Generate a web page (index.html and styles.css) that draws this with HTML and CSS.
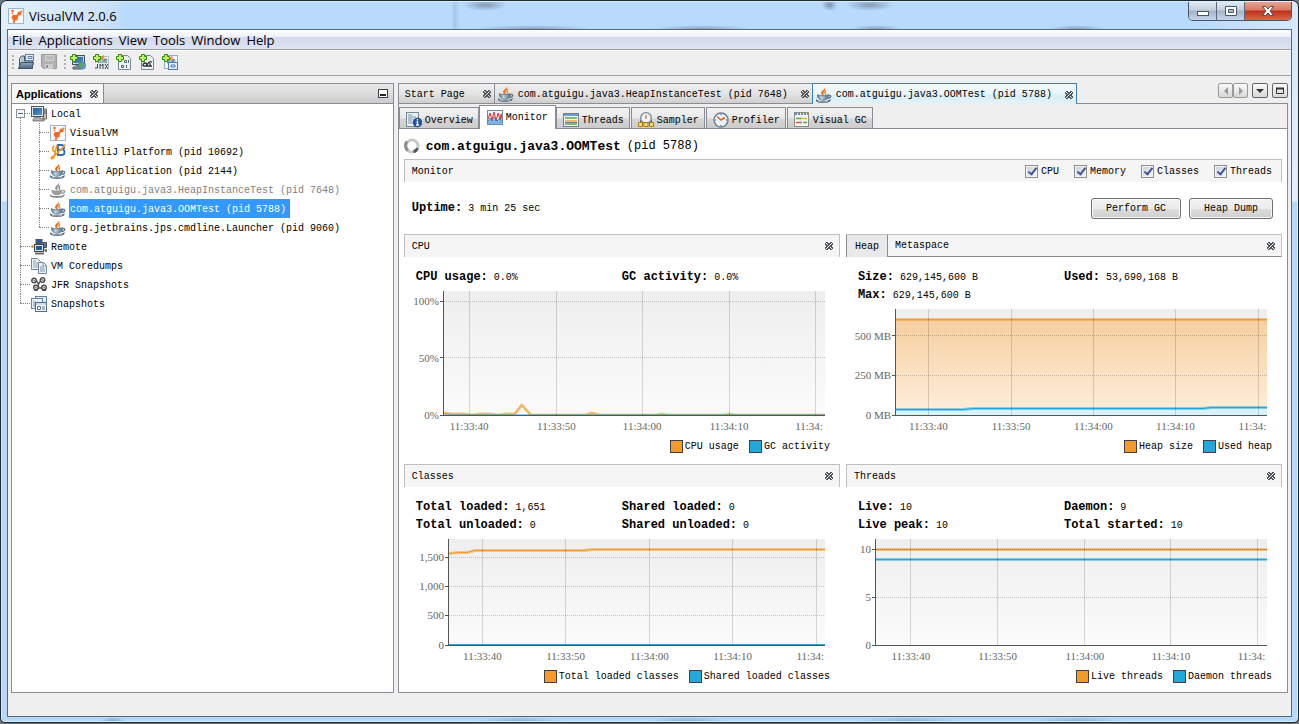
FILE: index.html
```html
<!DOCTYPE html>
<html lang="en">
<head>
    <meta charset="UTF-8">
    <meta name="viewport" content="width=device-width, initial-scale=1.0">
    <title>VisualVM 2.0.6</title>
    <link rel="stylesheet" href="styles.css">
</head>
<body>

    <!-- Icon sprite -->
    <svg class="sprite" aria-hidden="true">
        <defs>
            <linearGradient id="plotFill" x1="0" y1="0" x2="0" y2="1"><stop offset="0" stop-color="#eeeeee"/><stop offset="1" stop-color="#fbfbfb"/></linearGradient>
            <linearGradient id="heapFill" x1="0" y1="0" x2="0" y2="1"><stop offset="0" stop-color="#f5cf9f"/><stop offset="1" stop-color="#feefdd"/></linearGradient>
            <linearGradient id="steel" x1="0" y1="0" x2="0" y2="1"><stop offset="0" stop-color="#8fa9bd"/><stop offset="1" stop-color="#4c657b"/></linearGradient>
            <linearGradient id="cup" x1="0" y1="0" x2="1" y2="0"><stop offset="0" stop-color="#54718a"/><stop offset=".35" stop-color="#c3d3df"/><stop offset="1" stop-color="#4f6b83"/></linearGradient>
            <linearGradient id="screen" x1="0" y1="0" x2="1" y2="1"><stop offset="0" stop-color="#1c5f9e"/><stop offset="1" stop-color="#5a93c4"/></linearGradient>
        </defs>
        <symbol id="i-vm" viewBox="0 0 16 16">
            <rect x=".5" y=".5" width="15" height="15" fill="#f6f8fb" stroke="#9db4cd"/>
            <circle cx="4.500" cy="3" r="1.300" fill="#f26a21"/><circle cx="11.500" cy="5.500" r="2" fill="#f26a21"/><circle cx="13.500" cy="3.500" r="1" fill="#f26a21"/>
            <path d="M4.500 7.500C6 6 8 8 10 6l1 1.500C9.500 8 10 10 9.500 11.500c-1 1.800-4 1.500-5 0-1-1-1-3 0-4z" fill="#f26a21"/><circle cx="6" cy="13.700" r="1.200" fill="#f26a21"/><circle cx="4.500" cy="5.500" r=".8" fill="#f26a21"/>
        </symbol>
        <symbol id="i-java" viewBox="0 0 16 16">
            <path d="M8.800 0c.8 2.500-3.800 3.700-3.800 6 0 1.500 1.500 1.800 2 3 1.500-1-.2-2.500.8-4C8.800 3.800 10 2.500 8.800 0z" fill="#e8701a"/>
            <path d="M10.500 2.500C7.500 4.500 8 6 9 7.300c.3.700 0 1.200-.5 1.900C12 8.200 9 6 10.500 2.500z" fill="#f09030"/>
            <path d="M13 8.500c2.500-.3 2.500 2.800-1.500 3" stroke="#54708a" stroke-width="1.300" fill="none"/>
            <path d="M1.500 7.500c1 1.500 9.500 1.500 11 0 .3 3-1.500 5.800-5.500 5.800S1.200 10.500 1.500 7.500z" fill="url(#cup)" stroke="#4e697f" stroke-width=".7"/>
            <path d="M0 12c1 1.800 3.500 2 7 2s6-.2 7.500-2c.8 2.800-2.500 3.900-7.500 3.900S-.8 14.800 0 12z" fill="#4d6275"/><path d="M2 14.300c2.500.7 7.500.7 10 0" stroke="#b7c7d3" stroke-width=".8" fill="none"/>
        </symbol>
        <symbol id="i-java-off" viewBox="0 0 16 16">
            <path d="M8.800 0c.8 2.500-3.800 3.700-3.800 6 0 1.500 1.500 1.800 2 3 1.500-1-.2-2.500.8-4C8.800 3.800 10 2.500 8.800 0zM10.500 2.500C7.500 4.500 8 6 9 7.300c.3.700 0 1.200-.5 1.900C12 8.200 9 6 10.500 2.500z" fill="#999"/>
            <path d="M13 8.500c2.500-.3 2.500 2.800-1.500 3" stroke="#999" stroke-width="1.300" fill="none"/>
            <path d="M1.500 7.500c1 1.500 9.500 1.500 11 0 .3 3-1.500 5.800-5.500 5.800S1.200 10.500 1.500 7.500z" fill="#9d9d9d"/>
            <path d="M0 12c1 1.800 3.500 2 7 2s6-.2 7.500-2c.8 2.800-2.500 3.900-7.500 3.900S-.8 14.800 0 12z" fill="#8b8b8b"/>
        </symbol>
        <symbol id="i-idea" viewBox="0 0 16 16">
            <path d="M8 1h3.500c3.200 0 3.200 4 1 4.700 3 .5 2.700 5.300-1 5.300H8z" fill="none" stroke="#2f6ab8" stroke-width="1.800"/><path d="M8 5.700h4" stroke="#2f6ab8" stroke-width="1.600"/>
            <path d="M4 1.500C2 4 2 7.500 5 7.500M7 1C6 5 5 9 4.500 11.500 4 14 3 15 1.500 14.500c-1-1 1-2 3-3C8 9 12 4 15.500.500" stroke="#f29a1c" stroke-width="1.600" fill="none"/>
        </symbol>
        <symbol id="i-pc" viewBox="0 0 16 16">
            <path d="M12 3h3.500v10H12z" fill="#c5c5bd" stroke="#666"/><path d="M13 5h2M13 7h2" stroke="#555"/>
            <rect x=".5" y=".5" width="12" height="10" fill="#dfe5ea" stroke="#4c565e"/><rect x="2" y="2" width="9" height="7" fill="url(#screen)"/>
            <path d="M4 11h5l1 2h3v2H2v-1.500z" fill="#aeb3b5" stroke="#555" stroke-width=".7"/>
        </symbol>
        <symbol id="i-remote" viewBox="0 0 16 16">
            <rect x="5" y=".5" width="6" height="4" fill="#285f96" stroke="#555"/><rect x="9.500" y="3.500" width="6" height="5" fill="#3a79b2" stroke="#555"/>
            <rect x="3.500" y="5.500" width="9" height="7" fill="#dce4ea" stroke="#444"/><rect x="5" y="7" width="6" height="4" fill="#1d5c99"/>
            <path d="M4 13.500h9v2H4zM13 10h3v3h-2z" fill="#66706f"/><circle cx="1.500" cy="7.500" r="1.500" fill="#dca02b"/><path d="M14 9v2" stroke="#f0bd36"/>
        </symbol>
        <symbol id="i-dump" viewBox="0 0 16 16">
            <path d="M.5.500h6l3 3v8h-9z" fill="#edf2f6" stroke="#70859a"/><path d="M2 3h3M2 5h5M2 7h5M2 9h5" stroke="#8fa3b5"/>
            <path d="M7.500 4.500h5l3 3v8h-8z" fill="#edf2f6" stroke="#70859a"/><path d="M9 9h4M9 11h5M9 13h5M12 5v3h3" stroke="#8096aa" fill="none"/>
        </symbol>
        <symbol id="i-jfr" viewBox="0 0 16 16">
            <g fill="#ddd" stroke="#444" stroke-width="1.300"><circle cx="3" cy="3.500" r="2.300"/><circle cx="11.500" cy="3" r="2.300"/><circle cx="5" cy="10.500" r="2.300"/><circle cx="13" cy="10.500" r="2.300"/><path d="M5.500 3.500L7.500 7l2-3M7.500 7v3M7.500 11h3M3 13h4M11 13.300h4" fill="none"/></g>
            <path d="M2 2.500l2 2M10.500 2l2 2M4 9.500l2 2M12 9.500l2 2" stroke="#555"/>
        </symbol>
        <symbol id="i-snap" viewBox="0 0 16 16">
            <rect x="4.500" y=".5" width="11" height="9" fill="#dfe9f5" stroke="#6882a5"/><rect x=".5" y="2.500" width="11" height="10" fill="#e8eff8" stroke="#6882a5"/>
            <path d="M2 6h3M2 8h3M2 10h3" stroke="#6d90bf"/><rect x="4.500" y="6.500" width="11" height="9" fill="#f4f7fb" stroke="#526c90"/><path d="M5 8h10" stroke="#a9bfdc"/><path d="M6.500 10.500h3v3h-3zM11 11h3M11 13h3" stroke="#5f748c" fill="none"/>
        </symbol>
        <symbol id="i-open" viewBox="0 0 16 16">
            <path d="M1.500 14.500v-10l2-2.500h3v5h8v7.500z" fill="#b9c9d5" stroke="#455a6c"/><rect x="7.500" y=".5" width="8" height="6" fill="#eef4fc" stroke="#5c7db3"/><path d="M10 2.500h4v2h-4z" fill="none" stroke="#5c7db3"/>
            <path d="M.5 14.500l2.500-6h12.500l-1.500 6z" fill="url(#steel)" stroke="#3c5367"/>
        </symbol>
        <symbol id="i-save" viewBox="0 0 16 16">
            <path d="M.5.500h15v14h-13l-2-2z" fill="#b2b2b2" stroke="#9a9a9a"/><path d="M4 1h9v6H4z" fill="#d2d2d2"/><path d="M5 3h7M5 5h7" stroke="#a2a2a2"/><path d="M4 10h8v5H4z" fill="#cfcfcf"/><path d="M5 11h2v3H5z" fill="#949494"/>
        </symbol>
        <symbol id="i-plus" viewBox="0 0 8 8"><path d="M2.500.500h3v2h2v3h-2v2h-3v-2h-2v-3h2z" fill="#c8f06a" stroke="#278a0b"/></symbol>
        <symbol id="i-add-remote" viewBox="0 0 16 16">
            <rect x="2.500" y="1.500" width="12" height="9" fill="#ccd7df" stroke="#42515d"/><rect x="4" y="3" width="9" height="6" fill="url(#screen)"/><path d="M5 11h6v2H3v2h8" fill="#98a5ad" stroke="#555"/>
            <circle cx="12" cy="11.500" r="3.700" fill="#5f9bd2" stroke="#386699" stroke-width=".6"/><path d="M10 9l3-.5 1 2-2 1-1 3-2-2z" fill="#59a84b"/><use href="#i-plus" width="8" height="8"/>
        </symbol>
        <symbol id="i-add-jmx" viewBox="0 0 16 16">
            <path d="M2.500 2.500h13v12h-13z" fill="#eceff2" stroke="#b5bec6"/><use href="#i-java" x="5" width="10" height="10"/><path d="M2 9h13v7H2z" fill="#e7eaec"/><path d="M4.500 10v4H2M7 15v-5l1.500 2L10 10v5M12 10l3 5M15 10l-3 5" stroke="#3e4c58" fill="none"/><use href="#i-plus" width="8" height="8"/>
        </symbol>
        <symbol id="i-add-core" viewBox="0 0 16 16">
            <path d="M2.500 1.500h9l3 3v11h-12z" fill="#eef2f5" stroke="#76899a"/><path d="M8.500 6.500h2v2h-2zM12.500 6v3M5.500 11.500h2v2h-2zM10.500 11v3" stroke="#4f6273" fill="none"/><use href="#i-plus" width="8" height="8"/>
        </symbol>
        <symbol id="i-add-jfr" viewBox="0 0 16 16">
            <path d="M2.500 1.500h9l3 3v11h-12z" fill="#eef2f5" stroke="#76899a"/><path d="M4 12c0-4 4-4 4 0M8 12c0-3 3-5 5-4M4 12h9M11 9v3" stroke="#333" fill="none" stroke-width="1.300"/><use href="#i-plus" width="8" height="8"/>
        </symbol>
        <symbol id="i-add-snap" viewBox="0 0 16 16">
            <rect x="2.500" y="1.500" width="13" height="13" fill="#f3f6fa" stroke="#9aabbd"/><use href="#i-java" x="5" y="1" width="9" height="9"/><rect x="6.500" y="8.500" width="9" height="7" fill="#e7f0fb" stroke="#477bc0"/><path d="M9 11h4v2H9z" fill="none" stroke="#477bc0"/><use href="#i-plus" width="8" height="8"/>
        </symbol>
        <symbol id="i-overview" viewBox="0 0 16 16">
            <rect x=".5" y=".5" width="12" height="14" fill="#e9eff4" stroke="#75899b"/><path d="M2 3h4M2 5h8M2 7h5M2 9h4M2 11h4" stroke="#7f95a9"/><circle cx="11.500" cy="10.500" r="4.500" fill="#24559d" stroke="#173c73" stroke-width=".6"/><path d="M11.500 7v1.500M10.500 10h1v3M10 13h3" stroke="#fff" stroke-width="1.300" fill="none"/>
        </symbol>
        <symbol id="i-monitor" viewBox="0 0 16 16">
            <rect x=".5" y=".5" width="15" height="14" fill="#eef3f8" stroke="#718ba5"/><path d="M1 14v-3l2-2 2 2 2-2 3 2 3-2 2 2v3z" fill="#7db2e5"/><path d="M1 9l2-6 2 7 2-8 2 9 2-8 2 7 1-6 1 5" stroke="#d83636" fill="none"/><path d="M1 11l2-3 2 3 2-4 3 4 3-3 2 3" stroke="#2a68b0" fill="none" stroke-width=".8"/>
        </symbol>
        <symbol id="i-threads" viewBox="0 0 16 16">
            <rect x=".5" y="1.500" width="15" height="13" fill="#f1f4f6" stroke="#6e7f8f"/><path d="M1 3h14" stroke="#6f9bcf" stroke-width="2"/><path d="M2 6h12M2 12h12" stroke="#56a944" stroke-width="1.500"/><path d="M2 9h12" stroke="#e4a82b" stroke-width="1.500"/><path d="M2 10.500h12" stroke="#4d6a86" stroke-width=".8"/>
        </symbol>
        <symbol id="i-sampler" viewBox="0 0 16 16">
            <circle cx="8" cy="6" r="5.300" fill="#eef3f8" stroke="#7188a2" stroke-width="1.300"/><path d="M8 3v4" stroke="#e0701b" stroke-width="1.300"/><path d="M2.500 10.500v-2M13.500 10.500v-2" stroke="#555"/>
            <path d="M.5 10.500h4v4h-4zM6 10.500h4v4H6zM11.500 10.500h4v4h-4z" fill="#f6d88a" stroke="#a97b17"/>
        </symbol>
        <symbol id="i-profiler" viewBox="0 0 16 16">
            <circle cx="8" cy="8" r="7" fill="#eef3f8" stroke="#697f96" stroke-width="1.400"/><path d="M4 4.500L8 8l4-2.500" stroke="#e06a1a" stroke-width="1.600" fill="none"/><path d="M8 2v1M8 13v1M2 8h1M13 8h1" stroke="#555"/>
        </symbol>
        <symbol id="i-gc" viewBox="0 0 16 16">
            <rect x=".5" y=".5" width="14" height="14" fill="#f7f7f5" stroke="#8b8b84"/><path d="M1 2h13" stroke="#6f87a3" stroke-width="2" stroke-dasharray="2 1"/><path d="M2 6.500h5M9 10.500h4" stroke="#45b42c" stroke-width="1.400"/><path d="M7 6.500h6" stroke="#e8b224" stroke-width="1.400"/><path d="M2 10.500h6" stroke="#df4a2c" stroke-width="1.400"/><path d="M7 4v9" stroke="#b9b9b9" stroke-width=".7"/>
        </symbol>
        <symbol id="i-close" viewBox="0 0 8 8">
            <path d="M1 0h1v1H1zM2 0h1v1H2zM5 0h2v1H5zM0 1h1v2H0zM2 1h1v1H2zM3 1h1v1H3zM4 1h1v1H4zM5 1h1v1H5zM7 1h1v2H7zM1 2h1v1H1zM3 2h1v1H3zM4 2h1v1H4zM6 2h1v1H6zM1 3h2v1H1zM5 3h2v1H5zM3 3h1v1H3zM1 4h2v1H1zM4 4h1v1H4zM5 4h2v1H5zM0 5h1v2H0zM1 5h1v1H1zM3 5h1v1H3zM4 5h1v1H4zM6 5h1v1H6zM7 5h1v2H7zM2 6h1v1H2zM3 6h1v1H3zM4 6h1v1H4zM5 6h1v1H5zM1 7h2v1H1zM5 7h2v1H5z" fill="#50555b"/>
        </symbol>
        <symbol id="i-min" viewBox="0 0 10 9"><rect x=".5" y=".5" width="9" height="8" fill="#fff" stroke="#3c3f44"/><path d="M2 6h6" stroke="#222" stroke-width="2"/></symbol>
    </svg>

    <div class="window">

        <header class="titlebar">
            <svg class="icon"><use href="#i-vm"/></svg>
            <h1 class="window-title">VisualVM 2.0.6</h1>
            <div class="window-buttons">
                <button type="button" class="win-btn" aria-label="Minimize"><svg width="14" height="12"><rect x="1.500" y="6.500" width="11" height="4" fill="#fff" stroke="#4b5767"/></svg></button>
                <button type="button" class="win-btn" aria-label="Maximize"><svg width="14" height="12"><path d="M1.500 1.500h11v9h-11zM4.500 4.500v3h5v-3z" fill="#fff" fill-rule="evenodd" stroke="#4b5767"/></svg></button>
                <button type="button" class="win-btn win-close" aria-label="Close"><svg width="14" height="12"><path d="M1.500 1.500h3L7 4l2.500-2.500h3L9 6l3.500 4.500h-3L7 8l-2.500 2.500h-3L5 6z" fill="#fff" stroke="#5a4a55"/></svg></button>
            </div>
        </header>

        <div class="client">
            <nav class="menubar">
                <button type="button">File</button>
                <button type="button">Applications</button>
                <button type="button">View</button>
                <button type="button">Tools</button>
                <button type="button">Window</button>
                <button type="button">Help</button>
            </nav>

            <div class="toolbar">
                <span class="grip"></span>
                <button type="button" aria-label="Load"><svg class="icon"><use href="#i-open"/></svg></button>
                <button type="button" aria-label="Save" disabled><svg class="icon"><use href="#i-save"/></svg></button>
                <span class="grip"></span>
                <button type="button" aria-label="Add remote host"><svg class="icon"><use href="#i-add-remote"/></svg></button>
                <button type="button" aria-label="Add JMX connection"><svg class="icon"><use href="#i-add-jmx"/></svg></button>
                <button type="button" aria-label="Add VM coredump"><svg class="icon"><use href="#i-add-core"/></svg></button>
                <button type="button" aria-label="Add JFR snapshot"><svg class="icon"><use href="#i-add-jfr"/></svg></button>
                <button type="button" aria-label="Add snapshot"><svg class="icon"><use href="#i-add-snap"/></svg></button>
            </div>

            <div class="work">

                <!-- Applications tree -->
                <aside class="explorer">
                    <div class="explorer-head">
                        <h2 class="explorer-tab">Applications <button type="button" class="close" aria-label="Close Applications"><svg><use href="#i-close"/></svg></button></h2>
                        <button type="button" class="minimize" aria-label="Minimize window group"><svg width="10" height="9"><use href="#i-min"/></svg></button>
                    </div>
                    <ul class="tree">
                        <li>
                            <button type="button" class="toggle" aria-label="Collapse Local"></button>
                            <div class="node"><svg class="icon"><use href="#i-pc"/></svg><span>Local</span></div>
                            <ul>
                                <li><div class="node"><svg class="icon"><use href="#i-vm"/></svg><span>VisualVM</span></div></li>
                                <li><div class="node"><svg class="icon"><use href="#i-idea"/></svg><span>IntelliJ Platform (pid 10692)</span></div></li>
                                <li><div class="node"><svg class="icon"><use href="#i-java"/></svg><span>Local Application (pid 2144)</span></div></li>
                                <li><div class="node finished"><svg class="icon"><use href="#i-java-off"/></svg><span>com.atguigu.java3.HeapInstanceTest (pid 7648)</span></div></li>
                                <li><div class="node selected"><svg class="icon"><use href="#i-java"/></svg><span>com.atguigu.java3.OOMTest (pid 5788)</span></div></li>
                                <li><div class="node"><svg class="icon"><use href="#i-java"/></svg><span>org.jetbrains.jps.cmdline.Launcher (pid 9060)</span></div></li>
                            </ul>
                        </li>
                        <li><div class="node"><svg class="icon"><use href="#i-remote"/></svg><span>Remote</span></div></li>
                        <li><div class="node"><svg class="icon"><use href="#i-dump"/></svg><span>VM Coredumps</span></div></li>
                        <li><div class="node"><svg class="icon"><use href="#i-jfr"/></svg><span>JFR Snapshots</span></div></li>
                        <li><div class="node"><svg class="icon"><use href="#i-snap"/></svg><span>Snapshots</span></div></li>
                    </ul>
                </aside>

                <main class="editor">
                    <div class="doc-tabs">
                        <div class="doc-tab plain"><a href="#start">Start Page</a><button type="button" class="close" aria-label="Close Start Page"><svg><use href="#i-close"/></svg></button></div>
                        <div class="doc-tab"><svg class="icon"><use href="#i-java"/></svg><a href="#heap-instance">com.atguigu.java3.HeapInstanceTest (pid 7648)</a><button type="button" class="close" aria-label="Close HeapInstanceTest"><svg><use href="#i-close"/></svg></button></div>
                        <div class="doc-tab active"><svg class="icon"><use href="#i-java"/></svg><a href="#oom">com.atguigu.java3.OOMTest (pid 5788)</a><button type="button" class="close" aria-label="Close OOMTest"><svg><use href="#i-close"/></svg></button></div>
                        <div class="doc-controls">
                            <div class="pair">
                                <button type="button" aria-label="Scroll left" disabled><svg width="8" height="8"><path d="M6 0v8L2 4z" fill="#999"/></svg></button>
                                <button type="button" aria-label="Scroll right" disabled><svg width="8" height="8"><path d="M2 0v8l4-4z" fill="#999"/></svg></button>
                            </div>
                            <button type="button" aria-label="Opened documents"><svg width="8" height="8"><path d="M0 2h8L4 6z" fill="#333"/></svg></button>
                            <button type="button" aria-label="Maximize"><svg width="8" height="8"><path d="M.5 1.500h7v5h-7z" fill="none" stroke="#333"/><path d="M0 1.500h8" stroke="#333" stroke-width="2"/></svg></button>
                        </div>
                    </div>

                    <div class="document">
                        <div class="view-tabs">
                            <button type="button" class="view-tab"><svg class="icon"><use href="#i-overview"/></svg>Overview</button>
                            <button type="button" class="view-tab active"><svg class="icon"><use href="#i-monitor"/></svg>Monitor</button>
                            <button type="button" class="view-tab"><svg class="icon"><use href="#i-threads"/></svg>Threads</button>
                            <button type="button" class="view-tab"><svg class="icon"><use href="#i-sampler"/></svg>Sampler</button>
                            <button type="button" class="view-tab"><svg class="icon"><use href="#i-profiler"/></svg>Profiler</button>
                            <button type="button" class="view-tab"><svg class="icon"><use href="#i-gc"/></svg>Visual GC</button>
                        </div>

                        <div class="view">
                            <h2 class="app-name">
                                <svg class="icon" viewBox="0 0 16 16"><circle cx="8" cy="8" r="6" fill="none" stroke="#c9c9c9" stroke-width="3"/><path d="M3 3.500A6 6 0 0 0 4 12.500" fill="none" stroke="#8d8d93" stroke-width="3"/><path d="M9.500 13.800a6 6 0 0 0 4-3.500" fill="none" stroke="#55555d" stroke-width="3"/></svg>
                                com.atguigu.java3.OOMTest <small>(pid 5788)</small>
                            </h2>

                            <div class="bar">
                                <h3>Monitor</h3>
                                <div class="checks">
                                    <label><input type="checkbox" checked>CPU</label>
                                    <label><input type="checkbox" checked>Memory</label>
                                    <label><input type="checkbox" checked>Classes</label>
                                    <label><input type="checkbox" checked>Threads</label>
                                </div>
                            </div>

                            <div class="uptime">
                                <p><b>Uptime:</b> 3 min 25 sec</p>
                                <button type="button" class="btn">Perform GC</button>
                                <button type="button" class="btn">Heap Dump</button>
                            </div>

                            <div class="cards">

                                <!-- CPU -->
                                <section class="card">
                                    <div class="bar"><h3>CPU</h3><button type="button" class="close" aria-label="Hide CPU"><svg><use href="#i-close"/></svg></button></div>
                                    <div class="details">
                                        <p><b>CPU usage:</b> 0.0%</p><p><b>GC activity:</b> 0.0%</p>
                                    </div>
                                    <div class="chart chart-cpu">
                                        <svg class="plot">
                                            <rect width="100%" height="100%" fill="url(#plotFill)"/>
                                            <line class="dots" x1="0" x2="100%" y1="8.1%" y2="8.1%"/><line class="dots" x1="0" x2="100%" y1="54%" y2="54%"/>
                                            <svg viewBox="0 0 382 124" preserveAspectRatio="none">
                                                <polyline class="halo orange" points="0,122 8,123 20,123 28,124 36,123 46,123 54,124 62,123 71,123 78,114 87,124 142,124 148,122 156,124 212,124 218,123 224,124 280,124 286,123 292,124 382,124"/>
                                                <polyline class="core orange" points="0,122 8,123 20,123 28,124 36,123 46,123 54,124 62,123 71,123 78,114 87,124 142,124 148,122 156,124 212,124 218,123 224,124 280,124 286,123 292,124 382,124"/>
                                                <polyline class="core blue" points="0,124 382,124"/>
                                            </svg>
                                            <g class="cols"><line x1="6.600%" x2="6.600%" y2="100%"/><line x1="29.500%" x2="29.500%" y2="100%"/><line x1="52%" x2="52%" y2="100%"/><line x1="74.800%" x2="74.800%" y2="100%"/><line x1="97.400%" x2="97.400%" y2="100%"/></g>
                                            <g class="y-labels"><text x="-5" y="8.1%" dy="4">100%</text><text x="-5" y="54%" dy="4">50%</text><text x="-5" y="100%" dy="4">0%</text></g>
                                            <g class="ticks"><line x1="-4" x2="0" y1="8.1%" y2="8.1%"/><line x1="-4" x2="0" y1="54%" y2="54%"/><line x1="-4" x2="0" y1="100%" y2="100%"/></g>
                                            <g class="x-labels"><text x="6.600%" y="100%" dy="15">11:33:40</text><text x="29.500%" y="100%" dy="15">11:33:50</text><text x="52%" y="100%" dy="15">11:34:00</text><text x="74.800%" y="100%" dy="15">11:34:10</text><text class="cut" x="97.400%" y="100%" dx="-20" dy="15">11:34:</text></g>
                                        </svg>
                                    </div>
                                    <div class="legend"><span class="key key-orange">CPU usage</span><span class="key key-blue">GC activity</span></div>
                                </section>

                                <!-- Heap -->
                                <section class="card">
                                    <div class="bar tabbed"><button type="button" class="bar-tab active">Heap</button><button type="button" class="bar-tab">Metaspace</button><button type="button" class="close" aria-label="Hide Memory"><svg><use href="#i-close"/></svg></button></div>
                                    <div class="details">
                                        <p><b>Size:</b> 629,145,600 B</p><p><b>Used:</b> 53,690,168 B</p>
                                        <p><b>Max:</b> 629,145,600 B</p>
                                    </div>
                                    <div class="chart chart-heap">
                                        <svg class="plot">
                                            <rect width="100%" height="100%" fill="url(#plotFill)"/>
                                            <svg viewBox="0 0 371 106" preserveAspectRatio="none">
                                                <path d="M0 10.500H371V106H0z" fill="url(#heapFill)"/>
                                                <path d="M0 100H67l10-1H307l8-1H371V106H0z" fill="#d9f1fb"/>
                                                <polyline class="halo orange" points="0,10.500 371,10.500"/><polyline class="core orange" points="0,10.500 371,10.500"/>
                                                <polyline class="halo blue" points="0,100.500 67,100.500 77,99.500 307,99.500 315,98.500 371,98.500"/>
                                                <polyline class="core blue" points="0,100.500 67,100.500 77,99.500 307,99.500 315,98.500 371,98.500"/>
                                            </svg>
                                            <line class="dots" x1="0" x2="100%" y1="25%" y2="25%"/><line class="dots" x1="0" x2="100%" y1="62.500%" y2="62.500%"/>
                                            <g class="cols"><line x1="8.700%" x2="8.700%" y2="100%"/><line x1="31%" x2="31%" y2="100%"/><line x1="53.200%" x2="53.200%" y2="100%"/><line x1="75.300%" x2="75.300%" y2="100%"/><line x1="97.700%" x2="97.700%" y2="100%"/></g>
                                            <g class="y-labels"><text x="-5" y="25%" dy="4">500 MB</text><text x="-5" y="62.500%" dy="4">250 MB</text><text x="-5" y="100%" dy="4">0 MB</text></g>
                                            <g class="ticks"><line x1="-4" x2="0" y1="25%" y2="25%"/><line x1="-4" x2="0" y1="62.500%" y2="62.500%"/><line x1="-4" x2="0" y1="100%" y2="100%"/></g>
                                            <g class="x-labels"><text x="8.700%" y="100%" dy="15">11:33:40</text><text x="31%" y="100%" dy="15">11:33:50</text><text x="53.200%" y="100%" dy="15">11:34:00</text><text x="75.300%" y="100%" dy="15">11:34:10</text><text class="cut" x="97.700%" y="100%" dx="-20" dy="15">11:34:</text></g>
                                        </svg>
                                    </div>
                                    <div class="legend"><span class="key key-orange">Heap size</span><span class="key key-blue">Used heap</span></div>
                                </section>

                                <!-- Classes -->
                                <section class="card">
                                    <div class="bar"><h3>Classes</h3><button type="button" class="close" aria-label="Hide Classes"><svg><use href="#i-close"/></svg></button></div>
                                    <div class="details">
                                        <p><b>Total loaded:</b> 1,651</p><p><b>Shared loaded:</b> 0</p>
                                        <p><b>Total unloaded:</b> 0</p><p><b>Shared unloaded:</b> 0</p>
                                    </div>
                                    <div class="chart chart-classes">
                                        <svg class="plot">
                                            <rect width="100%" height="100%" fill="url(#plotFill)"/>
                                            <line class="dots" x1="0" x2="100%" y1="17.300%" y2="17.300%"/><line class="dots" x1="0" x2="100%" y1="44.600%" y2="44.600%"/><line class="dots" x1="0" x2="100%" y1="72%" y2="72%"/>
                                            <svg viewBox="0 0 376 106" preserveAspectRatio="none">
                                                <polyline class="halo orange" points="0,14.500 9,13.500 18,13.500 26,11.500 134,11.500 144,10.500 376,10.500"/>
                                                <polyline class="core orange" points="0,14.500 9,13.500 18,13.500 26,11.500 134,11.500 144,10.500 376,10.500"/>
                                                <polyline class="core blue" points="0,105.500 376,105.500"/>
                                            </svg>
                                            <g class="cols"><line x1="8.900%" x2="8.900%" y2="100%"/><line x1="31%" x2="31%" y2="100%"/><line x1="53.300%" x2="53.300%" y2="100%"/><line x1="75.400%" x2="75.400%" y2="100%"/><line x1="97.700%" x2="97.700%" y2="100%"/></g>
                                            <g class="y-labels"><text x="-5" y="17.300%" dy="4">1,500</text><text x="-5" y="44.600%" dy="4">1,000</text><text x="-5" y="72%" dy="4">500</text><text x="-5" y="100%" dy="4">0</text></g>
                                            <g class="ticks"><line x1="-4" x2="0" y1="17.300%" y2="17.300%"/><line x1="-4" x2="0" y1="44.600%" y2="44.600%"/><line x1="-4" x2="0" y1="72%" y2="72%"/><line x1="-4" x2="0" y1="100%" y2="100%"/></g>
                                            <g class="x-labels"><text x="8.900%" y="100%" dy="15">11:33:40</text><text x="31%" y="100%" dy="15">11:33:50</text><text x="53.300%" y="100%" dy="15">11:34:00</text><text x="75.400%" y="100%" dy="15">11:34:10</text><text class="cut" x="97.700%" y="100%" dx="-20" dy="15">11:34:</text></g>
                                        </svg>
                                    </div>
                                    <div class="legend"><span class="key key-orange">Total loaded classes</span><span class="key key-blue">Shared loaded classes</span></div>
                                </section>

                                <!-- Threads -->
                                <section class="card">
                                    <div class="bar"><h3>Threads</h3><button type="button" class="close" aria-label="Hide Threads"><svg><use href="#i-close"/></svg></button></div>
                                    <div class="details">
                                        <p><b>Live:</b> 10</p><p><b>Daemon:</b> 9</p>
                                        <p><b>Live peak:</b> 10</p><p><b>Total started:</b> 10</p>
                                    </div>
                                    <div class="chart chart-threads">
                                        <svg class="plot">
                                            <rect width="100%" height="100%" fill="url(#plotFill)"/>
                                            <svg viewBox="0 0 391 106" preserveAspectRatio="none">
                                                <polyline class="halo orange" points="0,10.500 391,10.500"/><polyline class="core orange" points="0,10.500 391,10.500"/>
                                                <polyline class="halo blue" points="0,20.500 391,20.500"/><polyline class="core blue" points="0,20.500 391,20.500"/>
                                            </svg>
                                            <line class="dots" x1="0" x2="100%" y1="9.800%" y2="9.800%"/><line class="dots" x1="0" x2="100%" y1="55%" y2="55%"/>
                                            <g class="cols"><line x1="8.900%" x2="8.900%" y2="100%"/><line x1="31.100%" x2="31.100%" y2="100%"/><line x1="53.400%" x2="53.400%" y2="100%"/><line x1="75.400%" x2="75.400%" y2="100%"/><line x1="97.600%" x2="97.600%" y2="100%"/></g>
                                            <g class="y-labels"><text x="-5" y="9.800%" dy="4">10</text><text x="-5" y="55%" dy="4">5</text><text x="-5" y="100%" dy="4">0</text></g>
                                            <g class="ticks"><line x1="-4" x2="0" y1="9.800%" y2="9.800%"/><line x1="-4" x2="0" y1="55%" y2="55%"/><line x1="-4" x2="0" y1="100%" y2="100%"/></g>
                                            <g class="x-labels"><text x="8.900%" y="100%" dy="15">11:33:40</text><text x="31.100%" y="100%" dy="15">11:33:50</text><text x="53.400%" y="100%" dy="15">11:34:00</text><text x="75.400%" y="100%" dy="15">11:34:10</text><text class="cut" x="97.600%" y="100%" dx="-20" dy="15">11:34:</text></g>
                                        </svg>
                                    </div>
                                    <div class="legend"><span class="key key-orange">Live threads</span><span class="key key-blue">Daemon threads</span></div>
                                </section>

                            </div>
                        </div>
                    </div>
                </main>

            </div>
        </div>
    </div>

</body>
</html>
```

FILE: styles.css
```css
* {
    box-sizing: border-box;
}
body {
    margin: 0;
    background-color: #6f7780;
    color: #000;
    font-family: "Liberation Mono", monospace;
    font-size: 10px;
}
h1, h2, h3, p, ul {
    margin: 0;
    padding: 0;
    font-size: inherit;
    font-weight: normal;
}
button {
    margin: 0;
    padding: 0;
    border: none;
    background: none;
    color: inherit;
    font: inherit;
}
a {
    color: inherit;
    text-decoration: none;
}
.sprite {
    position: absolute;
    width: 0;
    height: 0;
}
.icon {
    display: block;
    flex: none;
    width: 16px;
    height: 16px;
}
.close {
    flex: none;
    width: 8px;
    height: 8px;
}
.close svg {
    display: block;
    width: 8px;
    height: 8px;
}

/* Window frame */
.window {
    display: flex;
    flex-direction: column;
    height: calc(100vh - 1px);
    padding: 0 6px 5px;
    border: 1px solid #20262d;
    border-radius: 7px 7px 5px 5px;
    box-shadow: inset 0 0 0 1px #d3f0fc;
    background: radial-gradient(ellipse 14px 5px at 112px 100%, #6f9bbb, transparent),
        radial-gradient(ellipse 48px 5px at 40% 100%, #85a7c9, transparent),
        radial-gradient(ellipse 44px 5px at 53% 100%, #85a7c9, transparent),
        radial-gradient(ellipse 56px 5px at 70% 100%, #85a7c9, transparent),
        radial-gradient(ellipse 50px 5px at 83% 100%, #85a7c9, transparent),
        linear-gradient(#d6e7f9 0, #e2effc 200px, #b5d8fb 201px);
}
.titlebar {
    display: flex;
    flex: none;
    align-items: center;
    gap: 5px;
    height: 28px;
    margin: 0 -5px;
    padding: 0 5px 0 6px;
    border-radius: 6px 6px 0 0;
    border-top: 1px solid #d3f0fc;
    background: radial-gradient(ellipse 22px 6px at 37.300% 3px, #8499b5, transparent),
        radial-gradient(ellipse 8px 6px at 63.900% 3px, #7f93af, transparent),
        radial-gradient(ellipse 24px 6px at 67% 3px, #8499b5, transparent),
        radial-gradient(ellipse 60px 4px at 41% 100%, #879fbc, transparent),
        radial-gradient(ellipse 50px 4px at 54% 100%, #879fbc, transparent),
        radial-gradient(ellipse 26px 4px at 67.500% 100%, #879fbc, transparent),
        radial-gradient(ellipse 28px 4px at 83% 100%, #879fbc, transparent),
        linear-gradient(90deg, transparent 450px, #a5c7e8 452px, transparent 458px),
        linear-gradient(90deg, #e3effb 0, #cfe3f8 100px, #b7dafd 125px, #b7dafd 92%, #d6e8fa 100%);
}
.window-title {
    flex: 1;
    font-family: "Open Sans", sans-serif;
    font-size: 13px;
}
.window-buttons {
    display: flex;
    align-self: flex-start;
    height: 19px;
    border: 1px solid #4a5563;
    border-top: none;
    border-radius: 0 0 5px 5px;
    overflow: hidden;
}
.win-btn {
    display: flex;
    align-items: center;
    justify-content: center;
    width: 28px;
    border-right: 1px solid #5b6878;
    background: linear-gradient(#dfe8f2 0, #c3cfdd 45%, #a2b3c7 50%, #c3d6ea 100%);
}
.win-close {
    width: 46px;
    border-right: none;
    background: linear-gradient(#e8a491 0, #d97562 45%, #bb3019 50%, #d9694a 100%);
}
.client {
    display: flex;
    flex: 1;
    flex-direction: column;
    min-height: 0;
    border: 1px solid #5c6870;
    background-color: #efefef;
}
.menubar {
    display: flex;
    flex: none;
    gap: 6px;
    height: 20px;
    padding: 0 4px;
    border-bottom: 1px solid #9c9fa8;
    background: linear-gradient(#ffffff 0, #eef0f8 35%, #d4d9ec 40%, #dfe4f3 100%);
    font-family: "Open Sans", sans-serif;
    font-size: 13px;
}
.toolbar {
    display: flex;
    flex: none;
    align-items: center;
    gap: 7px;
    height: 26px;
    padding: 0 4px 2px;
    border-top: 1px solid #fff;
    border-bottom: 1px solid #a0a0a0;
}
.grip {
    width: 2px;
    height: 14px;
    background: repeating-linear-gradient(#b5b5b5 0, #b5b5b5 2px, transparent 2px, transparent 4px);
}
.grip + button {
    margin-left: -3px;
}
.work {
    display: grid;
    flex: 1;
    grid-template-columns: minmax(0, 43fr) minmax(0, 100fr);
    grid-template-rows: minmax(0, 1fr);
    gap: 4px;
    min-height: 0;
    padding: 7px 3px 23px 3px;
}

/* Applications tree */
.explorer {
    border: 1px solid #898c95;
    background-color: #fff;
}
.explorer-head {
    display: flex;
    align-items: center;
    justify-content: space-between;
    height: 20px;
    padding-right: 5px;
    border-bottom: 1px solid #898c95;
    background: linear-gradient(#e7e7e7 0, #dcdcdc 50%, #cbcbcb 100%);
}
.explorer-tab {
    display: flex;
    align-items: center;
    gap: 8px;
    height: 19px;
    padding: 0 5px 0 4px;
    border-right: 1px solid #898c95;
    background-color: #f6f6f6;
    font-family: "Liberation Sans", sans-serif;
    font-size: 11px;
    font-weight: bold;
}
.minimize svg {
    display: block;
}
.tree, .tree ul {
    list-style: none;
}
.tree li {
    position: relative;
    padding-left: 19px;
}
.tree li::before {
    content: "";
    position: absolute;
    top: 9px;
    left: 8px;
    width: 10px;
    border-top: 1px dotted #808080;
}
.tree li::after {
    content: "";
    position: absolute;
    top: 0;
    bottom: 0;
    left: 8px;
    border-left: 1px dotted #808080;
}
.tree li:last-child::after {
    bottom: auto;
    height: 9px;
}
.tree > li:first-child::after {
    top: 9px;
}
.toggle {
    position: absolute;
    z-index: 1;
    top: 5px;
    left: 4px;
    width: 9px;
    height: 9px;
    border: 1px solid #919191;
    background: linear-gradient(#4b63a7, #4b63a7) center / 5px 1px no-repeat #f6f6f6;
}
.node {
    display: flex;
    align-items: center;
    gap: 3px;
    height: 19px;
}
.node span {
    padding: 2px 4px 0 1px;
    line-height: 17px;
    white-space: nowrap;
}
.finished {
    color: #808080;
}
.selected span {
    background-color: #3399ff;
    color: #fff;
}

/* Document tabs */
.editor {
    display: flex;
    flex-direction: column;
    min-width: 0;
    min-height: 0;
}
.doc-tabs {
    display: flex;
    flex: none;
    height: 20px;
}
.doc-tab {
    display: flex;
    align-items: center;
    padding: 1px 3px 0;
    border: 1px solid #898c95;
    border-right: none;
    border-bottom: none;
    background: linear-gradient(#f0f0f0 0, #e4e4e4 50%, #cfcfcf 100%);
    white-space: nowrap;
}
.doc-tab a {
    margin: 0 13px 0 4px;
}
.doc-tab.plain a {
    margin: 0 18px 0 3px;
}
.doc-tab.active {
    position: relative;
    margin-bottom: -1px;
    border-color: #3c7fb1;
    border-right: 1px solid #3c7fb1;
    background: linear-gradient(#f3fafd 0, #eaf6fb 50%, #d8eef6 55%, #e4f2f8 100%);
}
.doc-controls {
    display: flex;
    gap: 4px;
    height: 15px;
    margin-left: auto;
}
.pair {
    display: flex;
}
.doc-controls button {
    display: flex;
    align-items: center;
    justify-content: center;
    width: 16px;
    height: 15px;
    border: 1px solid #60646b;
    border-radius: 2px;
    background: linear-gradient(#fafafa, #d8d8d8);
}
.doc-controls .pair button {
    width: 15px;
    border-color: #9a9a9a;
}
.document {
    display: flex;
    flex: 1;
    flex-direction: column;
    min-height: 0;
    border: 1px solid #898c95;
    background-color: #fff;
}
.view-tabs {
    display: flex;
    flex: none;
    align-items: flex-end;
    height: 25px;
    border-bottom: 1px solid #898c95;
    background-color: #efefef;
}
.view-tab {
    display: flex;
    align-items: center;
    gap: 3px;
    height: 21px;
    padding: 4px 5px 0 6px;
    border: 1px solid #898c95;
    border-bottom: none;
    background: linear-gradient(#f3f3f3 0, #e8e8e8 50%, #d6d6d6 55%, #cccccc 100%);
}
.view-tab.active {
    height: 24px;
    margin-bottom: -1px;
    padding: 2px 7px;
    background: #fff;
}
.view-tab.active ~ .view-tab {
    margin-right: 1px;
}

/* Monitor view */
.view {
    display: flex;
    flex: 1;
    flex-direction: column;
    min-height: 0;
    padding: 0 5px;
}
.app-name {
    display: flex;
    flex: none;
    align-items: center;
    gap: 6px;
    height: 30px;
    padding-top: 4px;
    font-size: 13px;
    font-weight: bold;
}
.app-name small {
    font-size: 12px;
    font-weight: normal;
}
.bar {
    display: flex;
    flex: none;
    align-items: center;
    justify-content: space-between;
    height: 23px;
    padding: 0 6px 0 7px;
    border: 1px solid #bfbfbf;
    border-bottom: none;
    background-color: #f5f5f5;
}
.checks {
    display: flex;
    gap: 15px;
    padding-right: 3px;
}
.checks label {
    display: flex;
    align-items: center;
    gap: 3px;
}
.checks input {
    appearance: none;
    width: 13px;
    height: 13px;
    margin: 0;
    border: 1px solid #8e8f8f;
    background: linear-gradient(135deg, #c9d0da, #f7f7f7);
    box-shadow: inset 0 0 0 1px #f4f4f4;
}
.checks input::before {
    content: "";
    display: block;
    width: 3px;
    height: 7px;
    margin: 0 0 0 4px;
    border: solid #3f5597;
    border-width: 0 2px 2px 0;
    transform: rotate(38deg);
}
.uptime {
    display: flex;
    flex: none;
    align-items: center;
    gap: 8px;
    height: 52px;
    padding: 0 9px 0 8px;
}
.uptime p {
    flex: 1;
}
b {
    font-size: 12px;
}
.btn {
    height: 21px;
    padding: 0 14px;
    border: 1px solid #707070;
    border-radius: 3px;
    background: linear-gradient(#f2f2f2 0, #ebebeb 50%, #dddddd 52%, #cfcfcf 100%);
    box-shadow: inset 0 0 0 1px #f8f8f8;
}
.cards {
    display: grid;
    flex: 1;
    grid-template-columns: minmax(0, 1fr) minmax(0, 1fr);
    grid-template-rows: minmax(0, 1fr) minmax(0, 1fr);
    gap: 2px 6px;
    min-height: 0;
}
.card {
    display: flex;
    flex-direction: column;
    min-width: 0;
    min-height: 0;
}
.bar.tabbed {
    justify-content: flex-start;
    padding-left: 0;
    border-bottom: 1px solid #8c8c8c;
}
.bar-tab {
    height: 22px;
    padding: 0 7px;
}
.bar-tab.active {
    margin: 0 0 -1px -1px;
    padding: 0 8px;
    border: solid #8c8c8c;
    border-width: 0 1px;
    background-color: #e9e9e9;
}
.tabbed .close {
    margin-left: auto;
}
.details {
    display: grid;
    grid-template-columns: 1fr 1fr;
    padding: 11px 12px 5px;
    line-height: 18px;
}
.details p {
    height: 18px;
    white-space: nowrap;
}
.chart {
    flex: 1 1 0;
    min-height: 0;
    margin: 0 15px 20px 39px;
    border-left: 1px solid #555;
    border-bottom: 1px solid #555;
}
.chart-heap {
    margin-left: 49px;
}
.chart-classes {
    margin-left: 44px;
}
.chart-threads {
    margin-left: 29px;
}
.plot {
    display: block;
    width: 100%;
    height: 100%;
    overflow: visible;
}
.plot line {
    shape-rendering: crispEdges;
}
.cols line {
    stroke: #000;
    stroke-opacity: 0.15;
}
.dots {
    stroke: #000;
    stroke-opacity: 0.2;
    stroke-dasharray: 1 1;
}
.ticks line {
    stroke: #555;
}
.halo, .core {
    fill: none;
    vector-effect: non-scaling-stroke;
}
.halo {
    stroke-width: 3px;
    stroke-opacity: 0.5;
}
.core {
    stroke-width: 1px;
}
.orange {
    stroke: #f39a2b;
}
.blue {
    stroke: #22a9d9;
}
.plot text {
    fill: #666;
    font-family: "Liberation Serif", serif;
    font-size: 11px;
}
.y-labels text {
    text-anchor: end;
}
.x-labels text {
    text-anchor: middle;
}
.x-labels .cut {
    text-anchor: start;
}
.legend {
    display: flex;
    flex: none;
    justify-content: flex-end;
    gap: 10px;
    height: 26px;
    padding: 0 10px 6px;
}
.key {
    display: flex;
    align-items: center;
    gap: 2px;
    white-space: nowrap;
}
.key::before {
    content: "";
    width: 11px;
    height: 11px;
    border: 1px solid #404040;
}
.key-orange::before {
    background-color: #f39a2b;
}
.key-blue::before {
    background-color: #22a9d9;
}
```
